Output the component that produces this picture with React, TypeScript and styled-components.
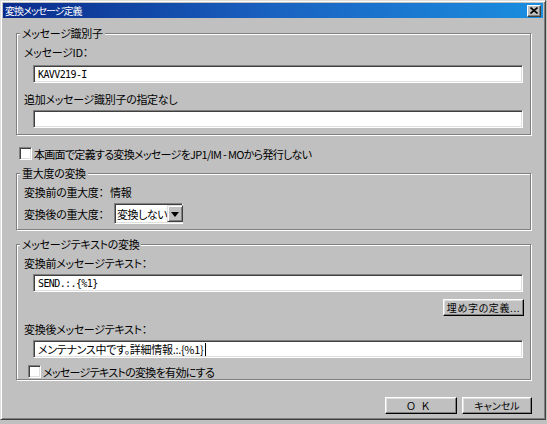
import React from "react";
import styled, { createGlobalStyle } from "styled-components";

const Global = createGlobalStyle`
  html, body { margin: 0; padding: 0; background: #c0c0c0; }
  body {
    font-family: "Noto Sans CJK JP", "Noto Sans", sans-serif;
    font-size: 11px;
    letter-spacing: -0.3px;
    color: #000;
    font-feature-settings: "palt";
  }
  * { box-sizing: border-box; }
`;

const Window = styled.div`
  width: 546px;
  height: 420px;
  background: #c0c0c0;
  border: 1px solid;
  border-color: #dfdfdf #404040 #404040 #dfdfdf;
  box-shadow: inset 1px 1px #fff, inset -1px -1px #808080;
  padding: 2px;
  display: flex;
  flex-direction: column;
`;

const TitleBar = styled.div`
  height: 15px;
  background: linear-gradient(to right, #0a2c8c 0%, #1a62c0 50%, #1a8ee0 100%);
  display: flex;
  align-items: center;
  justify-content: space-between;
  padding: 0 2px 0 2px;
`;

const TitleText = styled.span`
  color: #fff;
  font-size: 10px;
  line-height: 14px;
  letter-spacing: -1px;
`;

const CloseButton = styled.span`
  width: 14px;
  height: 12px;
  background: #c0c0c0;
  border: 1px solid;
  border-color: #fff #404040 #404040 #fff;
  box-shadow: inset -1px -1px #808080;
  display: flex;
  align-items: center;
  justify-content: center;
`;

const Body = styled.div`
  display: flex;
  flex-direction: column;
  padding: 8px 12px 0 13px;
`;

const Group = styled.fieldset<{ $top?: number }>`
  margin: ${(p) => p.$top ?? 0}px 0 0 0;
  padding: 0;
  min-width: 0;
  border: 1px solid #808080;
  box-shadow: inset 1px 1px #fff, 1px 1px #fff;
`;

const Legend = styled.legend`
  padding: 0 2px;
  margin-left: 3px;
  line-height: 14px;
  height: 14px;
  background: #c0c0c0;
`;

const GroupInner = styled.div<{ $pb: number }>`
  display: flex;
  flex-direction: column;
  padding: 5px 7px ${(p) => p.$pb}px 7px;
`;

const Label = styled.div<{ $top?: number }>`
  line-height: 14px;
  height: 14px;
  margin-top: ${(p) => p.$top ?? 0}px;
  white-space: nowrap;
`;

const Field = styled.div<{ $top?: number }>`
  margin: ${(p) => p.$top ?? 0}px 0 0 9px;
  height: 18px;
  background: #fff;
  border: 1px solid;
  border-color: #808080 #fff #fff #808080;
  box-shadow: inset 1px 1px #404040, inset -1px -1px #dfdfdf;
  padding: 1px 3px 0 4px;
  font-size: 11px;
  line-height: 15px;
  white-space: nowrap;
  display: flex;
  align-items: center;
`;

const Mono = styled.span`
  font-family: "DejaVu Sans Mono", "Liberation Mono", monospace;
  font-size: 10px;
  letter-spacing: -0.6px;
`;

const Caret = styled.span`
  display: inline-block;
  width: 1px;
  height: 13px;
  background: #000;
  margin-left: 2px;
`;

const CheckRow = styled.label<{ $top: number; $left: number }>`
  display: flex;
  align-items: center;
  height: 13px;
  margin: ${(p) => p.$top}px 0 0 ${(p) => p.$left}px;
  gap: 2px;
  line-height: 14px;
  letter-spacing: -0.7px;
  white-space: nowrap;
`;

const CheckBox = styled.span`
  width: 13px;
  height: 13px;
  flex: none;
  background: #fff;
  border: 1px solid;
  border-color: #808080 #fff #fff #808080;
  box-shadow: inset 1px 1px #404040, inset -1px -1px #dfdfdf;
`;

const SeverityGrid = styled.div`
  display: grid;
  grid-template-columns: 86px auto;
  row-gap: 4px;
  align-items: center;
  justify-items: start;
`;

const Select = styled.div`
  margin-left: 4px;
  width: 69px;
  height: 21px;
  background: #fff;
  border: 1px solid;
  border-color: #808080 #fff #fff #808080;
  box-shadow: inset 1px 1px #404040, inset -1px -1px #dfdfdf;
  padding: 2px;
  display: flex;
  align-items: center;
`;

const SelectText = styled.span`
  flex: 1;
  line-height: 14px;
  white-space: nowrap;
  letter-spacing: -0.5px;
`;

const ArrowButton = styled.span`
  width: 16px;
  height: 17px;
  flex: none;
  background: #c0c0c0;
  border: 1px solid;
  border-color: #dfdfdf #404040 #404040 #dfdfdf;
  box-shadow: inset 1px 1px #fff, inset -1px -1px #808080;
  display: flex;
  align-items: center;
  justify-content: center;
  &::after {
    content: "";
    border-left: 4px solid transparent;
    border-right: 4px solid transparent;
    border-top: 5px solid #000;
    margin-top: 1px;
  }
`;

const ButtonRow = styled.div<{ $top: number }>`
  display: flex;
  justify-content: flex-end;
  gap: 5px;
  margin-top: ${(p) => p.$top}px;
`;

const Button = styled.button<{ $w: number; $top?: number; $right?: number }>`
  width: ${(p) => p.$w}px;
  height: 17px;
  margin: ${(p) => p.$top ?? 0}px ${(p) => p.$right ?? 0}px 0 0;
  padding: 0;
  background: #c0c0c0;
  border: 1px solid;
  border-color: #fff #000 #000 #fff;
  box-shadow: inset -1px -1px #808080, inset 1px 1px #dfdfdf;
  font-family: inherit;
  font-feature-settings: "palt";
  font-size: 10px;
  line-height: 13px;
  color: #000;
  white-space: nowrap;
  display: flex;
  align-items: center;
  justify-content: center;
  align-self: flex-end;
`;

const Spaced = styled.span<{ $ls: number }>`
  letter-spacing: ${(p) => p.$ls}px;
`;

export default function App() {
  return (
    <>
      <Global />
      <Window>
        <TitleBar>
          <TitleText>変換メッセージ定義</TitleText>
          <CloseButton>
            <svg width="8" height="7" viewBox="0 0 8 7">
              <path d="M0.5 0.5 L7.5 6.5 M7.5 0.5 L0.5 6.5" stroke="#000" strokeWidth="1.6" />
            </svg>
          </CloseButton>
        </TitleBar>
        <Body>
          <Group>
            <Legend>メッセージ識別子</Legend>
            <GroupInner $pb={6}>
              <Label>メッセージID：</Label>
              <Field $top={6}>
                <Mono>KAVV219-I</Mono>
              </Field>
              <Label $top={9}>追加メッセージ識別子の指定なし</Label>
              <Field $top={4} />
            </GroupInner>
          </Group>

          <CheckRow $top={12} $left={3}>
            <CheckBox />
            <span>本画面で定義する変換メッセージをJP1/IM - MOから発行しない</span>
          </CheckRow>

          <Group $top={6}>
            <Legend>重大度の変換</Legend>
            <GroupInner $pb={5}>
              <SeverityGrid>
                <Label>変換前の重大度：</Label>
                <Label>情報</Label>
                <Label>変換後の重大度：</Label>
                <Select>
                  <SelectText>変換しない</SelectText>
                  <ArrowButton />
                </Select>
              </SeverityGrid>
            </GroupInner>
          </Group>

          <Group $top={7}>
            <Legend>メッセージテキストの変換</Legend>
            <GroupInner $pb={1}>
              <Label>変換前メッセージテキスト：</Label>
              <Field $top={4}>
                <Mono>SEND.:.{"{%1}"}</Mono>
              </Field>
              <Button $w={81} $top={7} $right={-1}>
                <Spaced $ls={0.6}>埋め字の定義...</Spaced>
              </Button>
              <Label $top={6}>変換後メッセージテキスト：</Label>
              <Field $top={4}>
                <span>メンテナンス中です。詳細情報.:.{"{%1}"}</span>
                <Caret />
              </Field>
              <CheckRow $top={7} $left={4}>
                <CheckBox />
                <span>メッセージテキストの変換を有効にする</span>
              </CheckRow>
            </GroupInner>
          </Group>

          <ButtonRow $top={17}>
            <Button $w={72}>
              <Spaced $ls={6}>ＯＫ</Spaced>
            </Button>
            <Button $w={70} $right={-1}>
              キャンセル
            </Button>
          </ButtonRow>
        </Body>
      </Window>
    </>
  );
}
